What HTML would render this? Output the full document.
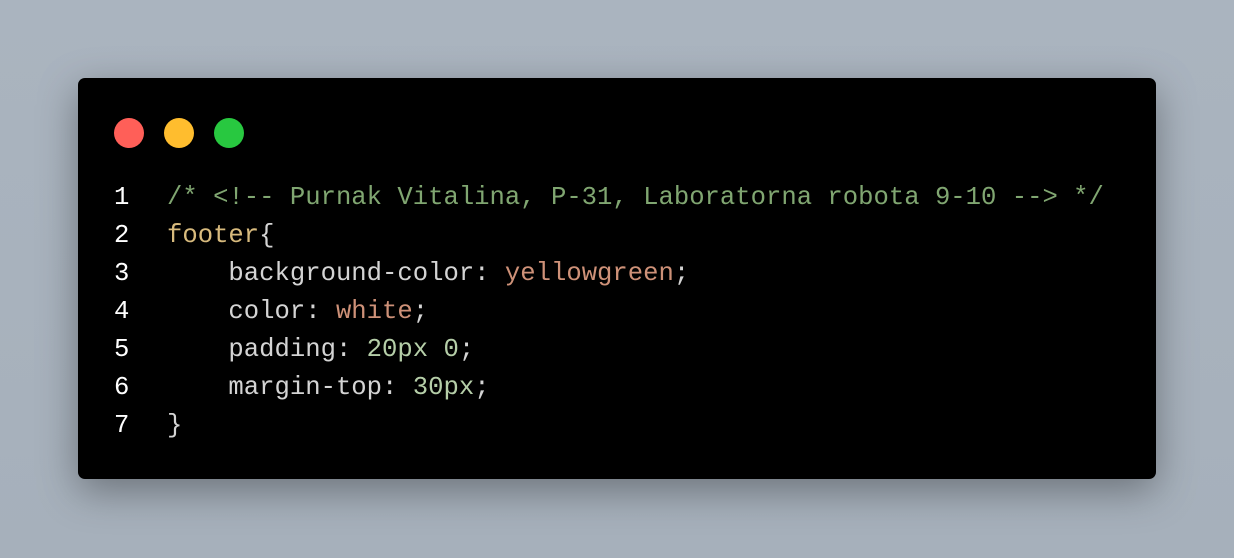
<!DOCTYPE html>
<html><head><style>
html,body{margin:0;padding:0}
body{width:1234px;height:558px;background:linear-gradient(180deg,#aab4bf,#a6b0bb);position:relative;overflow:hidden;font-family:"Liberation Mono",monospace}
.card{position:absolute;left:78px;top:78px;width:1078px;height:401px;background:#000;border-radius:7px;box-shadow:0 12px 40px rgba(0,0,0,.35)}
.dot{position:absolute;top:40px;width:30px;height:30px;border-radius:50%}
.code{position:absolute;left:36px;top:101px;font-size:25.6px;line-height:38px;white-space:pre;color:#d4d4d4}
.n{display:inline-block;width:53px;color:#fff}
.c{color:#80a671}.s{color:#d7ba7d}.v{color:#ce9178}.u{color:#b5cea8}
</style></head><body>
<div class="card">
<div class="dot" style="left:36px;background:#ff5f58"></div>
<div class="dot" style="left:86px;background:#ffbd2e"></div>
<div class="dot" style="left:136px;background:#28c840"></div>
<div class="code"><span class="n">1</span><span class="c">/* &lt;!-- Purnak Vitalina, P-31, Laboratorna robota 9-10 --&gt; */</span>
<span class="n">2</span><span class="s">footer</span>{
<span class="n">3</span>    background-color: <span class="v">yellowgreen</span>;
<span class="n">4</span>    color: <span class="v">white</span>;
<span class="n">5</span>    padding: <span class="u">20px 0</span>;
<span class="n">6</span>    margin-top: <span class="u">30px</span>;
<span class="n">7</span>}</div>
</div>
</body></html>
